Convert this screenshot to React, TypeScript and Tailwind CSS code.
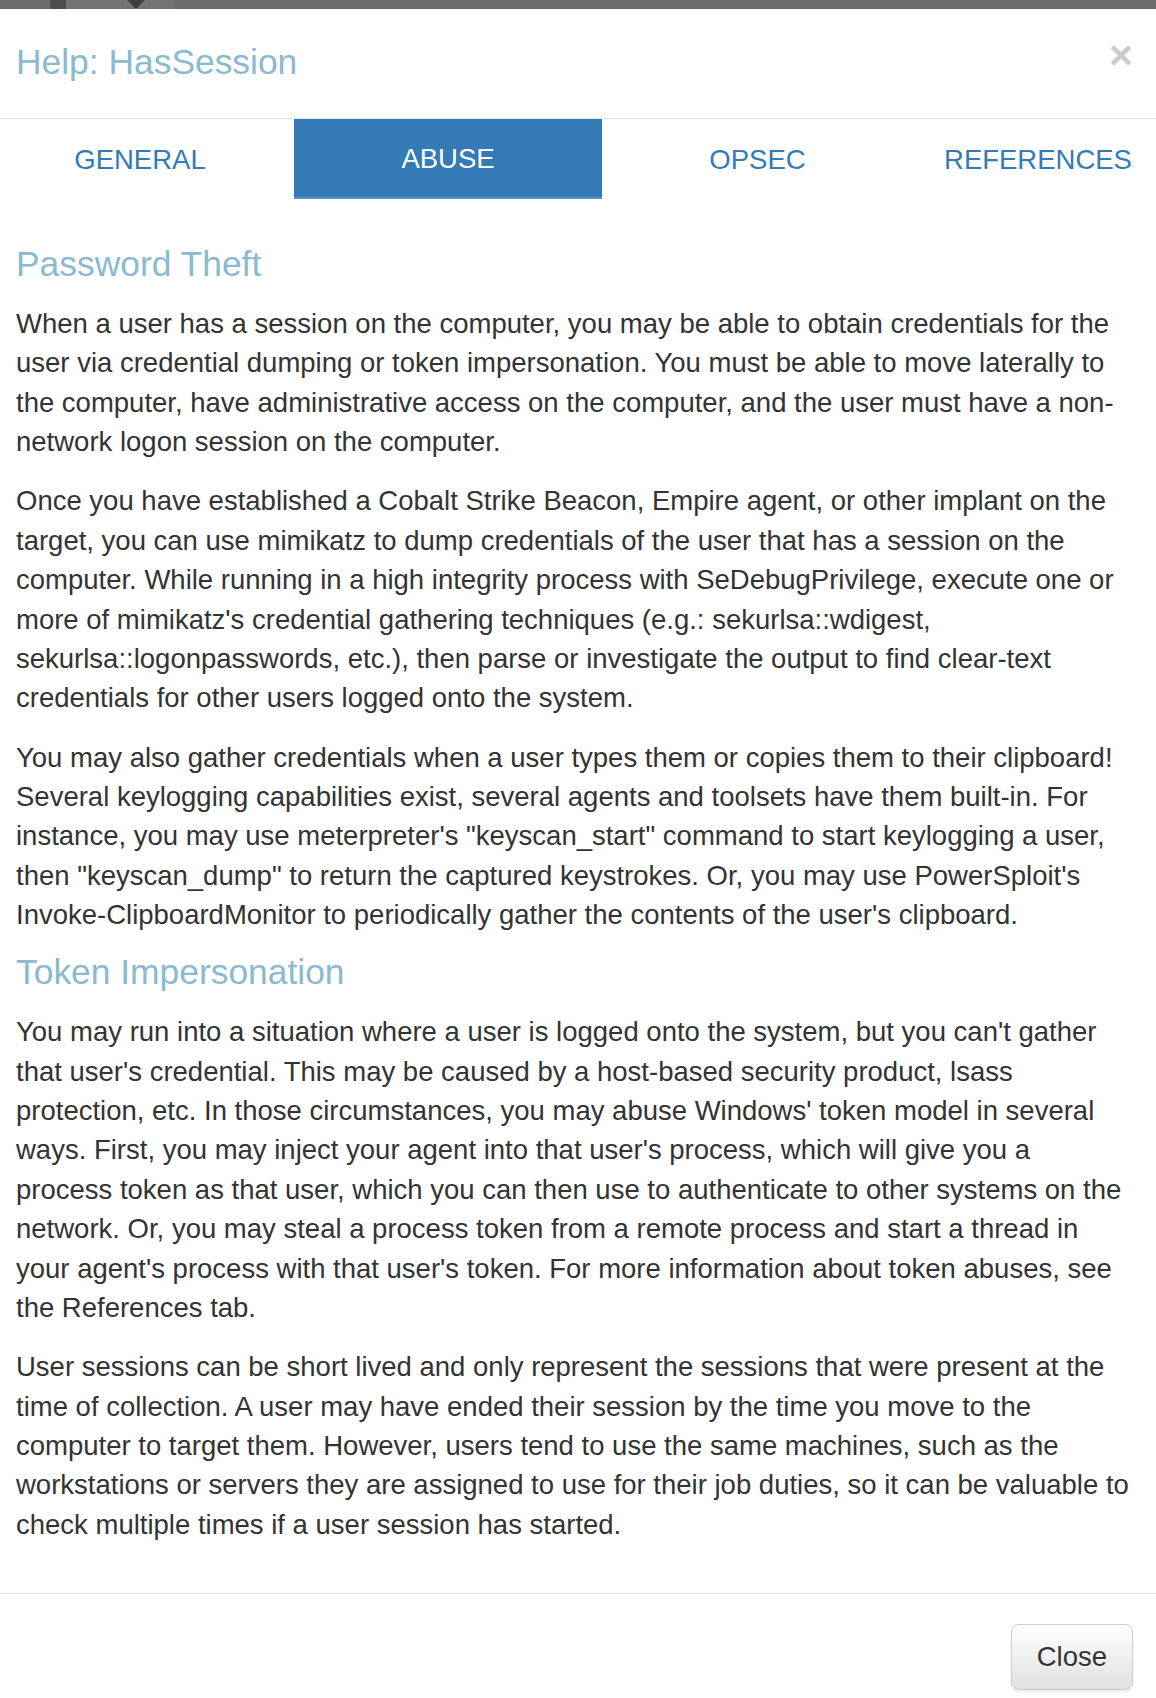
const tabs = [
  { label: "GENERAL", w: "w-[308px]" },
  { label: "ABUSE", w: "w-[308px]", active: true },
  { label: "OPSEC", w: "w-[311px]" },
  { label: "REFERENCES", w: "flex-1" },
];

const sections = [
  {
    title: "Password Theft",
    paragraphs: [
      "When a user has a session on the computer, you may be able to obtain credentials for the user via credential dumping or token impersonation. You must be able to move laterally to the computer, have administrative access on the computer, and the user must have a non-network logon session on the computer.",
      "Once you have established a Cobalt Strike Beacon, Empire agent, or other implant on the target, you can use mimikatz to dump credentials of the user that has a session on the computer. While running in a high integrity process with SeDebugPrivilege, execute one or more of mimikatz's credential gathering techniques (e.g.: sekurlsa::wdigest, sekurlsa::logonpasswords, etc.), then parse or investigate the output to find clear-text credentials for other users logged onto the system.",
      "You may also gather credentials when a user types them or copies them to their clipboard! Several keylogging capabilities exist, several agents and toolsets have them built-in. For instance, you may use meterpreter's \"keyscan_start\" command to start keylogging a user, then \"keyscan_dump\" to return the captured keystrokes. Or, you may use PowerSploit's Invoke-ClipboardMonitor to periodically gather the contents of the user's clipboard.",
    ],
  },
  {
    title: "Token Impersonation",
    paragraphs: [
      "You may run into a situation where a user is logged onto the system, but you can't gather that user's credential. This may be caused by a host-based security product, lsass protection, etc. In those circumstances, you may abuse Windows' token model in several ways. First, you may inject your agent into that user's process, which will give you a process token as that user, which you can then use to authenticate to other systems on the network. Or, you may steal a process token from a remote process and start a thread in your agent's process with that user's token. For more information about token abuses, see the References tab.",
      "User sessions can be short lived and only represent the sessions that were present at the time of collection. A user may have ended their session by the time you move to the computer to target them. However, users tend to use the same machines, such as the workstations or servers they are assigned to use for their job duties, so it can be valuable to check multiple times if a user session has started.",
    ],
  },
];

export default function App() {
  return (
    <div className="w-[1156px] h-[1698px] overflow-hidden bg-white font-['Liberation_Sans',Arial,sans-serif] text-[#333]">
      {/* backdrop strip above the modal */}
      <div className="h-[9px] bg-[#6b6b6b] flex">
        <div className="w-[50px]" />
        <div className="w-[125px] bg-[#747474] flex">
          <div className="w-[16px] h-[9px] bg-[#4e4e4e]" />
          <div className="w-[61px]" />
          <div className="w-0 h-0 border-l-[9px] border-r-[9px] border-t-[9px] border-l-transparent border-r-transparent border-t-[#3f3f3f]" />
        </div>
      </div>

      <div className="-ml-[14px] w-[1177px]">
        {/* header */}
        <div className="h-[110px] border-b border-[#e5e5e5] pt-[34px] px-[30px] flex justify-between">
          <h4 className="text-[35.4px] leading-[39px] text-[#8ab9d0]">Help: HasSession</h4>
          <button className="text-[41px] leading-none font-bold text-black opacity-20 -mt-[8px] h-[41px]">×</button>
        </div>

        {/* tabs */}
        <div className="flex h-[80px] text-[27.5px] text-[#337ab7]">
          {tabs.map((t) => (
            <div
              key={t.label}
              className={
                t.active
                  ? `${t.w} flex items-center justify-center pt-[2px] bg-[#337ab7] text-white border-b-2 border-[#5b95c8]`
                  : `${t.w} flex items-center justify-center pt-[2px]`
              }
            >
              {t.label}
            </div>
          ))}
        </div>

        {/* body */}
        <div className="px-[30px] pt-[46px] pb-[29px] text-[27.5px] leading-[39.36px]">
          {sections.map((s, i) => (
            <div key={s.title}>
              <h4 className={i === 0 ? "text-[35.4px] leading-[39px] text-[#8ab9d0] mb-[20px]" : "text-[35.4px] leading-[39px] text-[#8ab9d0] -mt-[1px] mb-[20px]"}>
                {s.title}
              </h4>
              {s.paragraphs.map((p, j) => (
                <p key={j} className="mb-[20px]">{p}</p>
              ))}
            </div>
          ))}
        </div>

        {/* footer */}
        <div className="border-t border-[#e5e5e5] pt-[30px] px-[30px] flex justify-end">
          <button className="h-[66px] px-[25px] text-[27.5px] text-[#333] rounded-[8px] border border-[#ccc] bg-gradient-to-b from-white to-[#e0e0e0] shadow-[0_2px_2px_rgba(0,0,0,0.08)] [text-shadow:0_1px_0_#fff]">
            Close
          </button>
        </div>
      </div>
    </div>
  );
}
